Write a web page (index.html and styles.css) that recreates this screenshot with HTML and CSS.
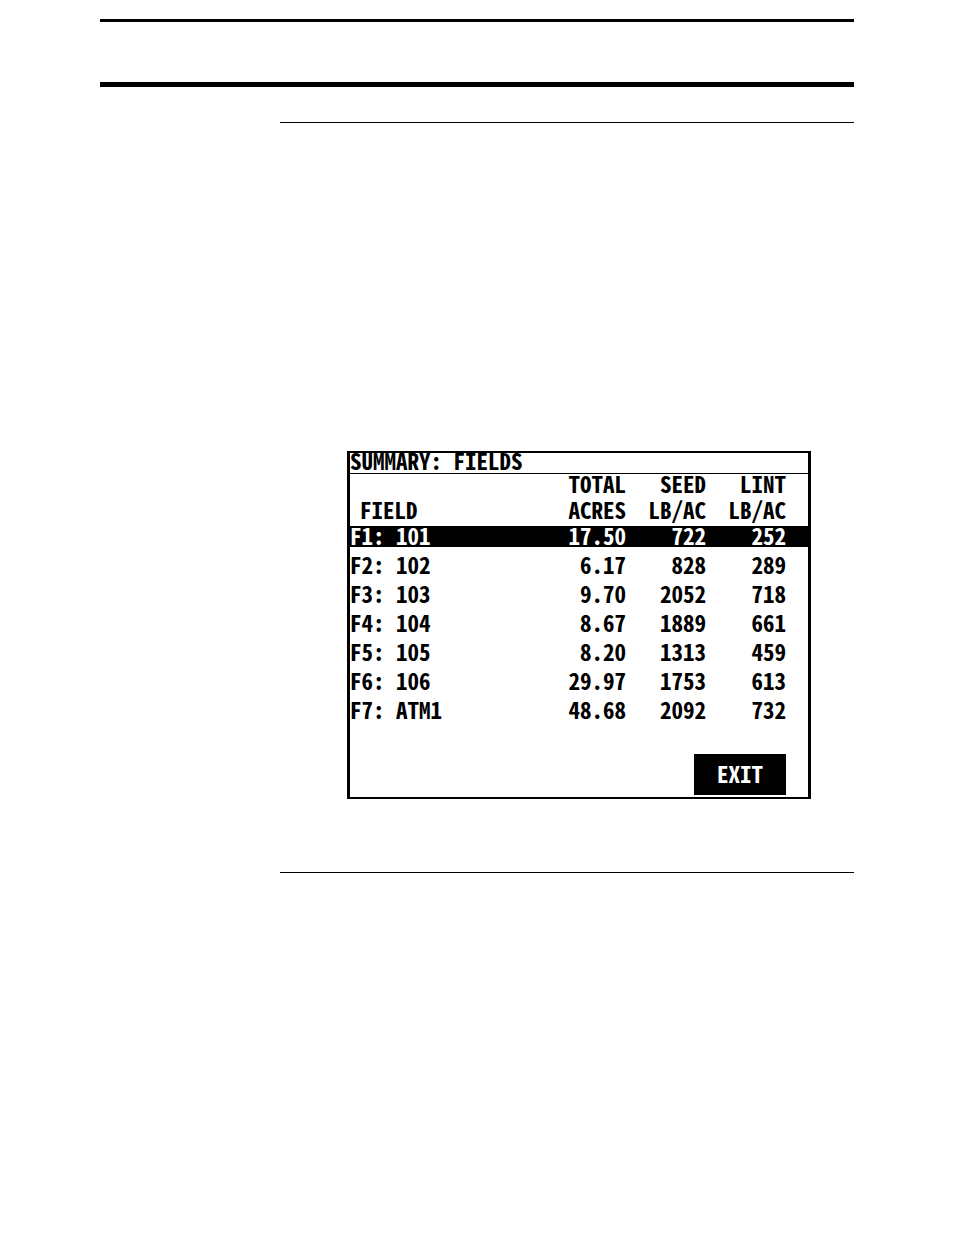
FILE: index.html
```html
<!DOCTYPE html>
<html lang="en">
<head>
<meta charset="utf-8">
<title>Summary: Fields</title>
<link rel="stylesheet" href="styles.css">
</head>
<body>
<div class="page">
  <header class="masthead"></header>
  <main class="section">
    <section class="screen">
      <h1 class="title">SUMMARY: FIELDS</h1>
      <table class="fields">
        <thead>
          <tr><th class="name" scope="col">FIELD</th><th scope="col">TOTAL<br>ACRES</th><th scope="col">SEED<br>LB/AC</th><th scope="col">LINT<br>LB/AC</th></tr>
        </thead>
        <tbody>
          <tr class="selected"><td>F1: 101</td><td>17.50</td><td>722</td><td>252</td></tr>
          <tr><td>F2: 102</td><td>6.17</td><td>828</td><td>289</td></tr>
          <tr><td>F3: 103</td><td>9.70</td><td>2052</td><td>718</td></tr>
          <tr><td>F4: 104</td><td>8.67</td><td>1889</td><td>661</td></tr>
          <tr><td>F5: 105</td><td>8.20</td><td>1313</td><td>459</td></tr>
          <tr><td>F6: 106</td><td>29.97</td><td>1753</td><td>613</td></tr>
          <tr><td>F7: ATM1</td><td>48.68</td><td>2092</td><td>732</td></tr>
        </tbody>
      </table>
      <div class="actions"><button class="exit" type="button">EXIT</button></div>
    </section>
  </main>
</div>
</body>
</html>
```
FILE: styles.css
```css
* { box-sizing: border-box; }
body {
  margin: 0;
  background: #fff;
  color: #000;
}
.page { padding: 19px 100px 0; }
.masthead {
  height: 68px;
  border-top: 3px solid #000;
  border-bottom: 5px solid #000;
}
.section {
  margin: 35px 0 0 180px;
  padding: 328px 43px 73px 67px;
  border-top: 1px solid #000;
  border-bottom: 1px solid #000;
}
.screen {
  border: solid #000;
  border-width: 2px 3px;
  font: bold 23px/26px "Noto Sans Mono CJK SC", "DejaVu Sans Mono", monospace;
}
.title {
  margin: 0;
  padding-bottom: 6px;
  border-bottom: 1px solid #000;
  font-size: 23px;
  line-height: 14px;
}
.fields {
  width: 100%;
  margin-top: -4px;
  border-collapse: collapse;
  table-layout: fixed;
}
.fields th, .fields td {
  padding: 0 1px 0 0;
  text-align: right;
  white-space: nowrap;
}
.fields th {
  width: 80px;
  padding-bottom: 4px;
  vertical-align: bottom;
}
.fields th:last-child { width: 101px; }
.fields th:last-child, .fields td:last-child { padding-right: 22px; }
.fields .name {
  width: auto;
  padding-left: 10px;
}
.fields th:first-child, .fields td:first-child { text-align: left; }
.fields td {
  padding-bottom: 2px;
  line-height: 27px;
}
.fields .selected { background: #000; color: #fff; }
.fields .selected td { line-height: 19px; }
.fields tr:nth-child(2) td { border-top: 4px solid #fff; }
.actions {
  display: flex;
  justify-content: flex-end;
  padding: 29px 22px 2px 0;
}
.exit {
  width: 92px;
  height: 41px;
  padding: 0 0 4px;
  border: 0;
  background: #000;
  color: #fff;
  font: inherit;
}
```
